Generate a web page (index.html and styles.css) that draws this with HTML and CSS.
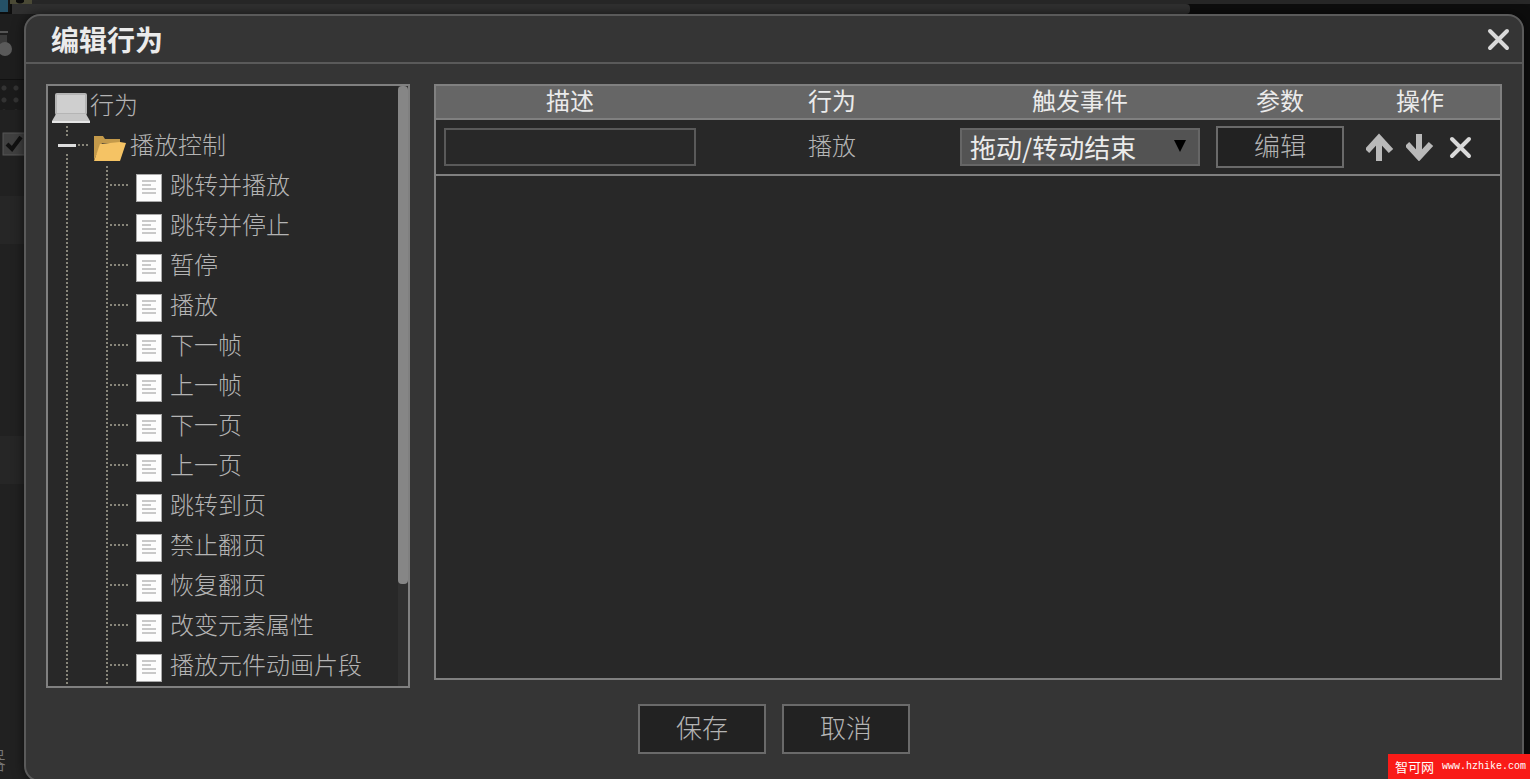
FILE: index.html
```
<!DOCTYPE html>
<html lang="zh-CN">
<head>
  <meta charset="UTF-8">
  <meta name="viewport" content="width=device-width, initial-scale=1.0">
  <title>编辑行为</title>
  <link rel="stylesheet" href="styles.css">
</head>
<body>
  <svg class="symbols" width="0" height="0" aria-hidden="true">
    <symbol id="icon-file" viewBox="0 0 42 40">
      <rect x="8" y="8" width="26" height="28" fill="#a8a8a8"/>
      <rect x="9" y="9" width="24" height="26" fill="#fdfdfd"/>
      <path d="M14 15h14M14 19h9M14 23h14M14 27h14" stroke="#c9c9c9" stroke-width="2"/>
    </symbol>
    <symbol id="icon-close" viewBox="0 0 28 28">
      <path d="M6 6l17 17M23 6L6 23" stroke="#d9d9d9" stroke-width="4" stroke-linecap="round"/>
    </symbol>
  </svg>

  <!-- editor behind the dialog -->
  <div class="editor" aria-hidden="true">
    <div class="editor-top">
      <svg width="42" height="14" viewBox="0 0 42 14">
        <rect width="8" height="12" fill="#255167"/>
        <path d="M9 0v12" stroke="#151515" stroke-width="2"/>
        <path d="M10 0h22v4H10z" fill="#4b4a36"/>
        <path d="M16 0h8v2q-4 3-8 0z" fill="#0a0a0a"/>
      </svg>
      <div class="editor-scroll"></div>
    </div>
    <div class="editor-side">
      <div class="side-tool">
        <svg width="14" height="30" viewBox="0 0 14 30">
          <path d="M0 2h8" stroke="#555" stroke-width="2"/>
          <path d="M0 5h7v9H0z" fill="#3b3b3b"/>
          <circle cx="5" cy="19" r="7" fill="#5a5a5a"/>
        </svg>
      </div>
      <div class="side-dots"></div>
      <div class="side-check">
        <svg width="24" height="24" viewBox="0 0 24 24">
          <rect x="3" y="1" width="24" height="22" fill="#404040" stroke="#565656"/>
          <path d="M7 12l5 5 9-12" fill="none" stroke="#111" stroke-width="4"/>
        </svg>
      </div>
      <div class="side-rows"></div>
      <div class="side-label">器</div>
    </div>
  </div>

  <section class="dialog" role="dialog" aria-labelledby="dialog-title">
    <header class="dialog-header">
      <h1 id="dialog-title">编辑行为</h1>
      <button class="icon-btn" type="button" aria-label="关闭"><svg width="28" height="28"><use href="#icon-close"/></svg></button>
    </header>

    <div class="dialog-body">
      <nav class="tree-panel">
        <ul class="tree">
          <li>
            <a class="node" href="#">
              <svg class="node-icon" viewBox="0 0 42 40">
                <rect x="7" y="7" width="32" height="22" rx="2" fill="#b5b5b5"/>
                <rect x="9" y="9" width="28" height="18" fill="#cfcfcf"/>
                <path d="M8 28h30l4 7v2H4v-2z" fill="#c6c6c6"/>
                <path d="M4 36h38" stroke="#e6e6e6" stroke-width="2"/>
              </svg>行为</a>
            <ul class="branch">
              <li class="open">
                <button class="toggle" type="button" aria-label="收起"></button>
                <a class="node" href="#">
                  <svg class="node-icon" viewBox="0 0 42 40">
                    <path d="M6 34V10h9l2 3h15v4H14z" fill="#c49a4a"/>
                    <path d="M12 18l20-2 6 1-6 18H6z" fill="#f5c364"/>
                  </svg>播放控制</a>
                <ul class="branch">
                  <li><a class="node" href="#"><svg class="node-icon"><use href="#icon-file"/></svg>跳转并播放</a></li>
                  <li><a class="node" href="#"><svg class="node-icon"><use href="#icon-file"/></svg>跳转并停止</a></li>
                  <li><a class="node" href="#"><svg class="node-icon"><use href="#icon-file"/></svg>暂停</a></li>
                  <li><a class="node" href="#"><svg class="node-icon"><use href="#icon-file"/></svg>播放</a></li>
                  <li><a class="node" href="#"><svg class="node-icon"><use href="#icon-file"/></svg>下一帧</a></li>
                  <li><a class="node" href="#"><svg class="node-icon"><use href="#icon-file"/></svg>上一帧</a></li>
                  <li><a class="node" href="#"><svg class="node-icon"><use href="#icon-file"/></svg>下一页</a></li>
                  <li><a class="node" href="#"><svg class="node-icon"><use href="#icon-file"/></svg>上一页</a></li>
                  <li><a class="node" href="#"><svg class="node-icon"><use href="#icon-file"/></svg>跳转到页</a></li>
                  <li><a class="node" href="#"><svg class="node-icon"><use href="#icon-file"/></svg>禁止翻页</a></li>
                  <li><a class="node" href="#"><svg class="node-icon"><use href="#icon-file"/></svg>恢复翻页</a></li>
                  <li><a class="node" href="#"><svg class="node-icon"><use href="#icon-file"/></svg>改变元素属性</a></li>
                  <li><a class="node" href="#"><svg class="node-icon"><use href="#icon-file"/></svg>播放元件动画片段</a></li>
                </ul>
              </li>
            </ul>
          </li>
        </ul>
        <div class="scrollbar"><div class="scrollbar-thumb"></div></div>
      </nav>

      <div class="action-panel">
        <table class="actions">
          <colgroup>
            <col>
            <col class="col-behavior">
            <col class="col-event">
            <col class="col-params">
            <col class="col-ops">
          </colgroup>
          <thead>
            <tr>
              <th>描述</th>
              <th>行为</th>
              <th>触发事件</th>
              <th>参数</th>
              <th class="ops">操作</th>
            </tr>
          </thead>
          <tbody>
            <tr>
              <td class="desc"><input class="field" type="text" aria-label="描述"></td>
              <td>播放</td>
              <td>
                <div class="select-wrap">
                  <select class="select" aria-label="触发事件">
                    <option>拖动/转动结束</option>
                  </select>
                  <svg class="select-arrow" width="12" height="12" viewBox="0 0 12 12"><path d="M0 0h12L6 12z" fill="#000"/></svg>
                </div>
              </td>
              <td><button class="btn btn-edit" type="button">编辑</button></td>
              <td class="ops">
                <div class="ops-list">
                  <button class="icon-btn" type="button" aria-label="上移">
                    <svg width="28" height="28" viewBox="0 0 28 28"><path d="M13 28V5M1 18L13 5l12 13" fill="none" stroke="#b9b9b9" stroke-width="6"/></svg>
                  </button>
                  <button class="icon-btn" type="button" aria-label="下移">
                    <svg width="28" height="28" viewBox="0 0 28 28"><path d="M13 1v23M1 11l12 13 12-13" fill="none" stroke="#b9b9b9" stroke-width="6"/></svg>
                  </button>
                  <button class="icon-btn" type="button" aria-label="删除"><svg width="28" height="28"><use href="#icon-close"/></svg></button>
                </div>
              </td>
            </tr>
          </tbody>
        </table>
      </div>
    </div>

    <footer class="dialog-footer">
      <button class="btn" type="button">保存</button>
      <button class="btn" type="button">取消</button>
    </footer>
  </section>

  <div class="site-mark"><span>智可网</span><span class="site-url">www.hzhike.com</span></div>
</body>
</html>
```

FILE: styles.css
```
:root {
  --dialog-bg: #353535;
  --panel-bg: #282828;
  --panel-border: #808080;
  --line: #5a5a5a;
  --text: #b4b4b4;
  --text-light: #ebebeb;
  --dot: #88867a;
}

* {
  margin: 0;
  padding: 0;
  box-sizing: border-box;
}

body {
  height: 100vh;
  overflow: hidden;
  padding: 14px 6px 0 24px;
  background-color: #0d0d0d;
  color: var(--text);
  font-family: "Liberation Sans", "Noto Sans CJK SC", sans-serif;
  font-size: 24px;
  font-weight: 300;
}

button,
input,
select {
  font: inherit;
  color: inherit;
}

ul {
  list-style: none;
}

.symbols {
  position: absolute;
}

/* editor behind the dialog */
.editor {
  position: absolute;
  inset: 0;
  z-index: -1;
  overflow: hidden;
  display: flex;
  flex-direction: column;
}

.editor-top {
  display: flex;
  height: 14px;
  background: linear-gradient(#272727 4px, #0d0d0d 4px);
}

.editor-top svg {
  flex: none;
  margin-right: -30px;
  z-index: 1;
}

.editor-scroll {
  width: 77%;
  margin-top: 4px;
  background-color: #303030;
  border-radius: 0 4px 4px 0;
}

.editor-side {
  width: 48px;
  flex: 1;
  background-color: #212121;
  display: flex;
  flex-direction: column;
}

.side-tool {
  height: 65px;
  padding-top: 16px;
  background-color: #1e1e1e;
}

.side-dots {
  height: 31px;
  border-top: 1px solid #111;
  background: radial-gradient(circle at 4px 8px, #333 2px, #1b1b1b 3px) 0 0 / 12px 12px;
}

.side-check {
  height: 72px;
  padding-top: 22px;
}

.side-rows {
  flex: 1;
  background: linear-gradient(#212121 14px, #262626 14px, #262626 62px, #212121 62px, #212121 254px, #262626 254px, #262626 302px, #212121 302px);
}

.side-label {
  height: 36px;
  margin-left: -18px;
  line-height: 36px;
  color: #777;
}

/* dialog */
.dialog {
  height: calc(100vh - 11px);
  display: flex;
  flex-direction: column;
  background-color: var(--dialog-bg);
  border: 2px solid var(--line);
  border-radius: 16px;
  box-shadow: 0 0 12px rgba(0, 0, 0, 0.6);
}

.dialog-header {
  display: flex;
  align-items: center;
  justify-content: space-between;
  height: 48px;
  padding: 0 10px 0 25px;
  border-bottom: 2px solid var(--line);
}

.dialog-header h1 {
  font-size: 28px;
  font-weight: 700;
  color: var(--text-light);
}

.icon-btn {
  display: flex;
  background: none;
  border: none;
  cursor: pointer;
}

.dialog-body {
  flex: 1;
  min-height: 0;
  display: flex;
  gap: 24px;
  padding: 20px 20px 0;
}

/* behaviour tree */
.tree-panel {
  width: 364px;
  display: flex;
  overflow: hidden;
  background-color: var(--panel-bg);
  border: 2px solid var(--panel-border);
}

.tree {
  flex: 1;
}

.node {
  display: flex;
  align-items: center;
  height: 40px;
  line-height: 36px;
  color: inherit;
  text-decoration: none;
  white-space: nowrap;
}

.node-icon {
  flex: none;
  width: 42px;
  height: 40px;
}

.branch > li {
  position: relative;
  padding-left: 40px;
  background:
    repeating-linear-gradient(to right, var(--dot) 0 2px, transparent 2px 4px) 22px 18px / 18px 2px no-repeat,
    repeating-linear-gradient(var(--dot) 0 2px, transparent 2px 4px) 18px 0 / 2px 100% no-repeat;
}

.toggle {
  position: absolute;
  left: 10px;
  top: 11px;
  width: 19px;
  height: 16px;
  border: none;
  background: linear-gradient(#ddd, #ddd) 0 7px / 18px 3px no-repeat var(--panel-bg);
}

.scrollbar {
  width: 10px;
  background-color: #303030;
}

.scrollbar-thumb {
  height: 83%;
  border-radius: 4px;
  background-color: #868686;
}

/* actions table */
.action-panel {
  flex: 1;
  margin-bottom: 8px;
  background-color: var(--panel-bg);
  border: 2px solid var(--panel-border);
}

.actions {
  width: 100%;
  table-layout: fixed;
  border-spacing: 0;
  text-align: center;
}

.col-behavior {
  width: 256px;
}

.col-event {
  width: 240px;
}

.col-params {
  width: 160px;
}

.col-ops {
  width: 140px;
}

.actions th {
  height: 34px;
  line-height: 32px;
  font-weight: 400;
  color: var(--text-light);
  background-color: #666;
  border-bottom: 2px solid var(--panel-border);
}

.actions td {
  height: 56px;
  line-height: 32px;
  vertical-align: middle;
  border-bottom: 2px solid var(--panel-border);
}

.actions .desc {
  padding: 0 8px;
}

.actions .ops {
  padding-right: 20px;
}

.field {
  display: block;
  width: 100%;
  height: 38px;
  padding: 0 8px;
  background-color: transparent;
  border: 2px solid var(--line);
}

.select-wrap {
  position: relative;
}

.select {
  display: block;
  width: 100%;
  height: 38px;
  padding: 0 8px;
  appearance: none;
  font-family: "Noto Sans CJK SC", sans-serif;
  font-size: 26px;
  font-weight: 400;
  line-height: 34px;
  color: var(--text-light);
  background-color: #535353;
  border: 2px solid #666;
  border-radius: 0;
}

.select-arrow {
  position: absolute;
  right: 14px;
  top: 12px;
  pointer-events: none;
}

.ops-list {
  display: flex;
  justify-content: center;
  gap: 12px;
}

.btn {
  width: 128px;
  height: 50px;
  font-size: 26px;
  line-height: 32px;
  background-color: #222;
  border: 2px solid #6a6a6a;
  cursor: pointer;
}

.btn-edit {
  display: block;
  height: 42px;
  margin: 0 auto;
}

.dialog-footer {
  display: flex;
  justify-content: center;
  gap: 16px;
  padding: 16px 0 26px;
}

.site-mark {
  position: absolute;
  right: 0;
  bottom: 0;
  display: flex;
  align-items: center;
  gap: 8px;
  height: 25px;
  padding: 0 4px 0 7px;
  font-size: 13px;
  font-weight: 400;
  color: #fff;
  background-color: #f91b18;
}

.site-url {
  font-family: "Liberation Mono", monospace;
  font-size: 10px;
}
```
